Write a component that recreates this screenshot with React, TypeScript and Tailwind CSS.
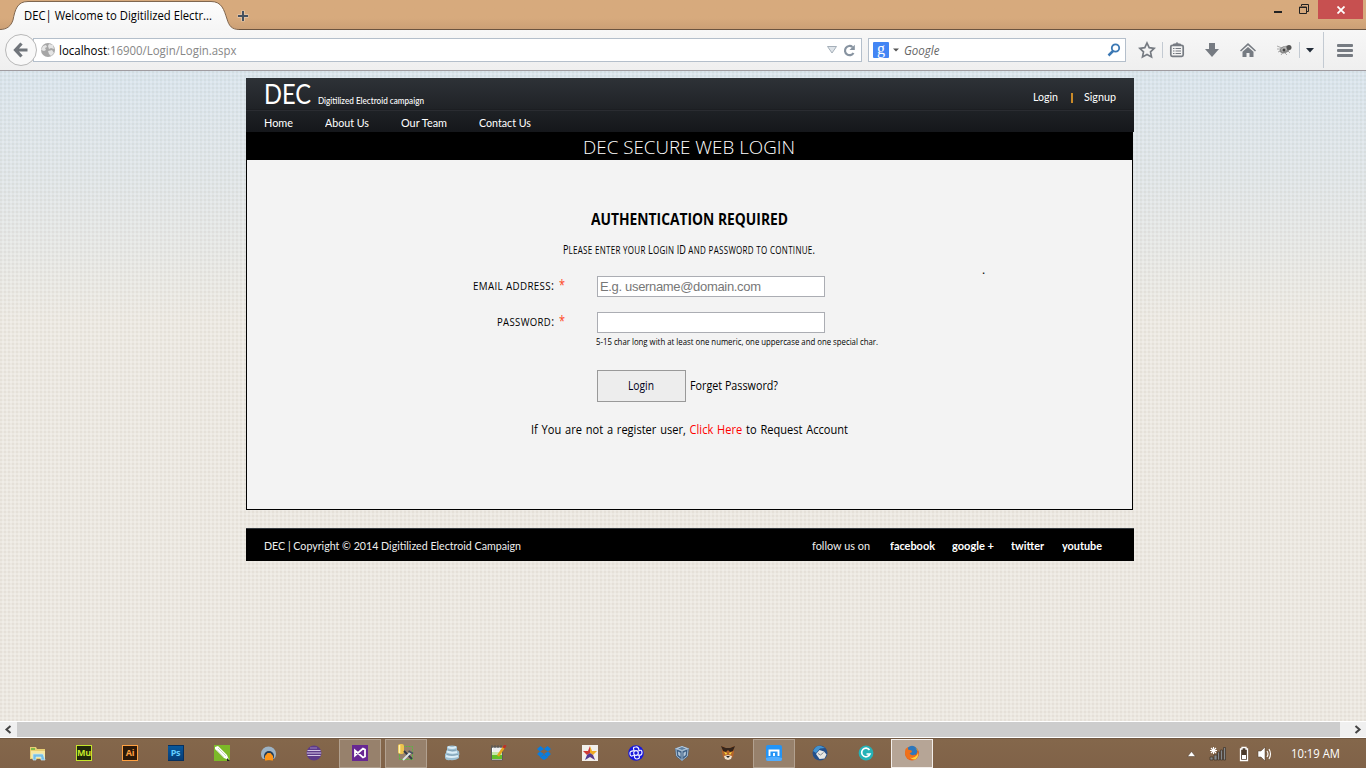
import React, { useLayoutEffect, useRef, useState } from "react";

type FitProps = { w: number; className?: string; children: React.ReactNode };

/* Sets a line of text to an exact advance width. */
function Fit({ w, className = "", children }: FitProps) {
  const ref = useRef<HTMLSpanElement>(null);
  const [scale, setScale] = useState(1);
  useLayoutEffect(() => {
    if (ref.current && ref.current.offsetWidth) setScale(w / ref.current.getBoundingClientRect().width);
  }, []);
  return (
    <span className={`block shrink-0 ${className}`} style={{ width: w }}>
      <span ref={ref} className="inline-block origin-left whitespace-pre" style={{ transform: `scaleX(${scale})` }}>
        {children}
      </span>
    </span>
  );
}

/* Small capitals with taller small letters than the browser's own synthesis. */
function SmallCaps({ text }: { text: string }) {
  return (
    <>
      {text.split(/([a-z]+)/).map((part, i) =>
        /[a-z]/.test(part) ? <span key={i} className="text-[10.5px] uppercase tracking-[0.4px]">{part}</span> : part,
      )}
    </>
  );
}

const Sep = ({ className = "" }: { className?: string }) => <div className={`w-px shrink-0 bg-[#c3cad2] ${className}`} />;

function TitleBar() {
  return (
    <div className="relative flex h-[30px] bg-linear-to-b from-[#d7aa7d] from-60% to-[#cb9f75]">
      <div className="absolute inset-x-0 bottom-0 h-px bg-[#6b5440]" />
      <svg className="absolute left-0 top-0" width="240" height="30">
        <defs>
          <linearGradient id="tab" x1="0" y1="0" x2="0" y2="1">
            <stop offset="0" stopColor="#fdfdfd" />
            <stop offset="1" stopColor="#f5f5f5" />
          </linearGradient>
        </defs>
        <path d="M0 29.5C7 29.5 11 26 13 20C15 10 17 1.5 28 1.5H211C222 1.5 224 10 227 19C229 26 232 29.5 239 29.5V30H0Z" fill="url(#tab)" />
        <path d="M0 29.5C7 29.5 11 26 13 20C15 10 17 1.5 28 1.5H211C222 1.5 224 10 227 19C229 26 232 29.5 239 29.5" fill="none" stroke="#806750" strokeWidth="1" />
      </svg>
      <div className="relative flex w-full">
        <Fit w={188} className="ml-6 mt-[7px] font-['Open_Sans',sans-serif] text-[12px] leading-[18px] text-black">
          DEC| Welcome to Digitilized Electr...
        </Fit>
        <svg className="ml-[25px] mt-[10px]" width="12" height="12">
          <path d="M6 .5v11M.5 6h11" stroke="#fff" strokeOpacity=".3" strokeWidth="4" />
          <path d="M6 1v10M1 6h10" stroke="#475260" strokeWidth="2" />
        </svg>
        <div className="flex-1" />
        <div className="mr-[17px] mt-[11px] h-[2px] w-2 bg-[#222]" />
        <svg className="mr-[9px] mt-[4px]" width="10" height="10" fill="none" stroke="#222">
          <path d="M2.5 2V.5h7v7H8" />
          <path d="M.5 3h7v6.5h-7z" />
          <path d="M0 3.5h8" />
        </svg>
        <div className="mr-[3px] flex h-[19px] w-[45px] items-center justify-center bg-[#c75050]">
          <svg width="8" height="8"><path d="M.5 .5l7 7M7.5 .5l-7 7" stroke="#fff" strokeWidth="1.8" /></svg>
        </div>
      </div>
    </div>
  );
}

function Toolbar() {
  return (
    <div className="flex h-[41px] items-center border-b border-[#a09ca1] bg-linear-to-b from-[#f7f7f7] to-[#efefef] font-['Open_Sans',sans-serif] text-[12px]">
      <div className="relative z-10 ml-[5px] flex size-8 shrink-0 items-center justify-center rounded-full border border-[#b8b8b8] bg-[#f8f8f8]">
        <svg width="16" height="16"><path d="M8.5 1.5L2.5 8l6 6.5M2.5 8h12" fill="none" stroke="#70757b" strokeWidth="3.2" /></svg>
      </div>
      <div className="-ml-1 flex h-6 w-[829px] shrink-0 items-center border border-[#b4bfcb] bg-white">
        <svg className="ml-[6px]" width="16" height="16">
          <circle cx="8" cy="8" r="7" fill="#a6a6a6" />
          <path d="M3 4l3-1 1 2-2 1 1 2-2 1-3-1zM9 2l4 1 1 4-3-1-2 1-1-3zM8 9l4-1 2 3-3 3-2-2z" fill="#e4e4e4" />
        </svg>
        <Fit w={48} className="mb-[-2px] ml-[3px] leading-[18px] text-black">localhost</Fit>
        <Fit w={129.5} className="mb-[-2px] leading-[18px] text-[#868686]">:16900/Login/Login.aspx</Fit>
        <div className="flex-1" />
        <svg className="mr-[6px]" width="10" height="8"><path d="M.5 .5h9L5 7z" fill="#dfe4e9" stroke="#a5afb9" /></svg>
        <svg className="mr-[5px]" width="13" height="13">
          <path d="M10.5 9A4.6 4.6 0 1 1 9.5 3" fill="none" stroke="#8793a0" strokeWidth="2.2" />
          <path d="M11.8 .8V6H6.5z" fill="#8793a0" />
        </svg>
      </div>
      <div className="ml-[6px] flex h-6 w-[258px] shrink-0 items-center border border-[#b4bfcb] bg-white">
        <div className="ml-[4px] flex size-4 items-center justify-center rounded-[1px] bg-[#4285f4] pb-[3px] font-['Liberation_Serif',serif] text-[16px] leading-none text-white">g</div>
        <svg className="ml-1" width="6" height="4"><path d="M0 .5h6L3 3.5z" fill="#555" /></svg>
        <Fit w={35.5} className="mb-[-2px] ml-[5px] italic leading-[18px] text-[#666]">Google</Fit>
        <div className="flex-1" />
        <svg className="mr-[4px]" width="14" height="14" fill="none" stroke="#3b78b4">
          <circle cx="8.5" cy="5" r="3.7" strokeWidth="1.8" />
          <path d="M6 8l-4.5 4.5" strokeWidth="2.5" />
        </svg>
      </div>
      <svg className="ml-3 shrink-0" width="18" height="18">
        <path d="M9 2l2.2 4.700 5 .6-3.700 3.500 1 5.100L9 13.400l-4.500 2.500 1-5.100L1.800 7.300l5-.6z" fill="none" stroke="#767b82" strokeWidth="1.7" />
      </svg>
      <Sep className="ml-[6px] h-4" />
      <svg className="ml-[6px] shrink-0" width="16" height="16">
        <path d="M4.5 3V2h2L8 .5 9.500 2h2v1" fill="#767b82" stroke="#767b82" />
        <rect x="1.800" y="3.300" width="12.400" height="11" rx="1.500" fill="#f3f3f3" stroke="#767b82" strokeWidth="1.7" />
        <path d="M4 6.500h1.500M6.500 6.500H12M4 9h1.500M6.500 9H12M4 11.500h1.500M6.500 11.500H12" stroke="#767b82" strokeWidth="1.2" />
      </svg>
      <svg className="ml-[19px] shrink-0" width="16" height="16" fill="#767b82"><path d="M5 1h6v6h4l-7 8-7-8h4z" /></svg>
      <svg className="ml-5 shrink-0" width="16" height="16" fill="#767b82"><path d="M8 1l8 7.500-1 1L8 3.300 1 9.500l-1-1zM8 5l5.500 4.800V15h-4v-4h-3v4h-4V9.800z" /></svg>
      <svg className="ml-5 shrink-0" width="17" height="16">
        <path d="M1 4l5 2M1 7h5M2 10l5-2M5 13l3-4M9 11l2 2M12 9l2 2" stroke="#aaa" />
        <ellipse cx="9" cy="7.500" rx="5.500" ry="3.500" transform="rotate(-22 9 8)" fill="#888" />
        <path d="M5 7l4-3 3 2-2 3-4 1z" fill="#b5b5b5" /><circle cx="13" cy="5.500" r="2.500" fill="#555" /><circle cx="8" cy="8" r="1.500" fill="#444" />
      </svg>
      <Sep className="ml-[6px] h-4" />
      <svg className="ml-[6px] shrink-0" width="8" height="5"><path d="M0 0h8L4 4.500z" fill="#222c38" /></svg>
      <Sep className="ml-[9px] h-9" />
      <svg className="ml-[13px] shrink-0" width="16" height="13" fill="#767b82"><rect width="16" height="3" rx="1" /><rect y="5" width="16" height="3" rx="1" /><rect y="10" width="16" height="3" rx="1" /></svg>
    </div>
  );
}

function SiteHeader() {
  return (
    <header className="h-[54px] w-[888px] bg-linear-to-b from-[#2e3237] to-[#15171b] font-['Lato',sans-serif] text-white">
      <div className="flex h-8 border-b border-[#1c1e22] pl-[18px] pr-[18px]">
        <Fit w={47} className="text-[26px] leading-[33px]">DEC</Fit>
        <Fit w={106} className="ml-[7px] mt-[15px] text-[9px] font-medium leading-4">Digitilized Electroid campaign</Fit>
        <div className="flex-1" />
        <Fit w={25} className="mt-[10px] text-[12px] leading-[18px]">Login</Fit>
        <div className="ml-[13px] mt-[15px] h-[10px] w-[2px] shrink-0 bg-[#c98a28]" />
        <Fit w={32} className="ml-[11px] mt-[10px] text-[12px] leading-[18px]">Signup</Fit>
      </div>
      <nav className="flex h-[22px] items-center border-t border-[#2a2c31] pl-[18px] pt-[2px] text-[12px] leading-[18px]">
        <Fit w={29}>Home</Fit>
        <Fit w={44} className="ml-8">About Us</Fit>
        <Fit w={46} className="ml-8">Our Team</Fit>
        <Fit w={52} className="ml-[31.5px]">Contact Us</Fit>
      </nav>
    </header>
  );
}

function LoginPanel() {
  return (
    <main className="relative h-[378px] w-[887px] border-x border-b border-black bg-[#f3f3f3] font-['Open_Sans',sans-serif] text-[12px] text-black">
      <h1 className="flex h-7 justify-center bg-black font-light text-white">
        <Fit w={212} className="-ml-[1px] text-[18px] leading-[30px]">DEC SECURE WEB LOGIN</Fit>
      </h1>
      <form className="flex flex-col pt-12">
        <Fit w={197} className="ml-[344px] h-6 text-[16px] font-bold leading-[22px]">AUTHENTICATION REQUIRED</Fit>
        <Fit w={252} className="ml-[316px] mt-2 h-5 leading-5"><SmallCaps text="Please enter your Login ID and password to continue." /></Fit>
        <div className="mt-4 flex h-[21px] items-center justify-end pr-[307px] leading-[19px]">
          <Fit w={81} className="mb-[2px]"><SmallCaps text="email address:" /></Fit>
          <Fit w={6} className="mb-[4px] ml-[5px] text-[15px] text-[#ff4422]">*</Fit>
          <input placeholder="E.g. username@domain.com" className="ml-[32px] h-[21px] w-[228px] border border-[#abadb3] bg-white px-[2px] font-['Liberation_Sans',sans-serif] text-[13px] tracking-[-0.33px] placeholder:text-[#777] outline-none" />
        </div>
        <div className="mt-[15px] flex h-[21px] items-center justify-end pr-[307px] leading-[19px]">
          <Fit w={57} className="mb-[2px]"><SmallCaps text="password:" /></Fit>
          <Fit w={6} className="mb-[4px] ml-[5px] text-[15px] text-[#ff4422]">*</Fit>
          <input type="password" className="ml-[32px] h-[21px] w-[228px] border border-[#abadb3] bg-white px-[2px] outline-none" />
        </div>
        <Fit w={282} className="ml-[349px] h-[18px] text-[9px] font-medium leading-[18px]">5-15 char long with at least one numeric, one uppercase and one special char.</Fit>
        <div className="ml-[350px] mt-[19px] flex h-8 items-center">
          <button type="button" className="flex h-8 w-[89px] items-center justify-center border border-[#999] bg-[#ededed] pr-[2px] text-[#000020]"><Fit w={26}>Login</Fit></button>
          <Fit w={88} className="ml-[4px]">Forget Password?</Fit>
        </div>
        <Fit w={317} className="ml-[284px] mt-[18px] h-5 leading-5 [word-spacing:1px]">
          If You are not a register user, <a className="text-[#ff0000]">Click Here</a> to Request Account
        </Fit>
      </form>
      <span className="absolute left-[735px] top-[129px] text-[12px] leading-[18px]">.</span>
    </main>
  );
}

function SiteFooter() {
  return (
    <footer className="mt-[18px] flex h-[33px] w-[888px] items-center border-t border-[#33383d] bg-black pl-[18px] pr-[32px] pt-[1px] font-['Lato',sans-serif] text-[12px] leading-[18px] text-[#eee]">
      <Fit w={257}>DEC | Copyright © 2014 Digitilized Electroid Campaign</Fit>
      <div className="flex-1" />
      <Fit w={58}>follow us on</Fit>
      <div className="flex font-bold text-white">
        <Fit w={45} className="ml-5">facebook</Fit>
        <Fit w={42} className="ml-[17px]">google +</Fit>
        <Fit w={33} className="ml-[17px]">twitter</Fit>
        <Fit w={40} className="ml-[18px]">youtube</Fit>
      </div>
    </footer>
  );
}

function ScrollBar() {
  return (
    <div className="flex h-[17px] items-center justify-between border-y border-white bg-[#f0f0f0]">
      <svg width="17" height="15"><path d="M10.5 4L6.5 7.5l4 3.5" fill="none" stroke="#444" strokeWidth="2" /></svg>
      <div className="h-full flex-1 bg-[#cdcdcd]" />
      <svg width="26" height="15"><path d="M15.5 4l4 3.5-4 3.5" fill="none" stroke="#444" strokeWidth="2" /></svg>
    </div>
  );
}

type Tile = { name: string; state?: "open" | "active"; art: React.ReactNode };

const label = (text: string, cls: string) => (
  <div className={`flex size-4 items-center justify-center font-['Open_Sans',sans-serif] text-[9px] font-bold leading-none tracking-tight ${cls}`}>{text}</div>
);

const tiles: Tile[] = [
  { name: "files", art: <svg width="18" height="16"><path d="M1 2h6l1 2h8v10H1z" fill="#e9ce72" /><path d="M2 3h4v2H2z" fill="#82b94b" /><path d="M2 6h14v7H2z" fill="#f6e7a0" /><path d="M4 15V9h10l2 6h-4v-3H7v3z" fill="#75bfe5" stroke="#cbeaf8" strokeWidth=".7" /></svg> },
  { name: "muse", art: label("Mu", "border border-[#c5e52a] bg-[#22280b] text-[#c5e52a]") },
  { name: "illustrator", art: label("Ai", "border border-[#ffa040] bg-[#2d1908] text-[#ffa040]") },
  { name: "photoshop", art: label("Ps", "border-y border-r border-[#06305f] bg-linear-to-b from-[#08589c] to-[#063d78] text-[#63ccff]") },
  { name: "corel", art: <svg width="16" height="16"><path d="M0 0h16v16H0z" fill="#7cb928" /><path d="M1 2l3-1 9 9 2 5-5-2L1 4z" fill="#fff" /><path d="M4 3l8 8M2.5 5l7 7" stroke="#b9cba8" strokeWidth=".8" /><path d="M13 13l3 3h-3z" fill="#222" /></svg> },
  { name: "avast", art: <svg width="17" height="16"><path d="M3 14a7.5 7.5 0 1 1 11 0z" fill="#9cb3c6" /><circle cx="9" cy="11" r="5" fill="#243e58" /><path d="M5 15.5V11l2.5-3h3l2.5 3v4.5z" fill="#ff9518" /></svg> },
  { name: "eclipse", art: <svg width="16" height="16"><circle cx="8" cy="8" r="7.5" fill="#5d3b88" /><path d="M1.5 5.5h13M.8 8h14.400M1.5 10.5h13" stroke="#d3c5e3" strokeWidth="1.1" /><path d="M4 3h7" stroke="#9c83c0" /></svg> },
  { name: "studio", state: "open", art: <svg width="16" height="16"><path d="M0 0h16v16H0z" fill="#672793" /><path d="M3 5.5v5l8-7 2 1v7l-2 1-8-7z" fill="none" stroke="#fff" strokeWidth="1.8" /></svg> },
  { name: "sqltools", state: "open", art: <svg width="18" height="17"><rect x="2.5" y="2.5" width="13" height="13" fill="none" stroke="#56b83e" strokeDasharray="2 1" /><rect x="1" y="0" width="6" height="10" rx="2" fill="#edc34d" /><path d="M2.5 1v8" stroke="#fff2b0" strokeWidth="1.5" /><path d="M7 7l8 8" stroke="#333b4a" strokeWidth="2" /><path d="M14 8l-8 8" stroke="#dbe4ea" strokeWidth="2" /><path d="M11.500 7l4.500 2.500" stroke="#4b5360" strokeWidth="2" /></svg> },
  { name: "database", art: <svg width="16" height="16"><path d="M3 1.5q5-2 10 0V5q3 1 2 3 1 1 0 2v3q-4 3-9 2-4 1-5-2V9l1-1V6l1-1z" fill="#9dbfd2" /><path d="M4 2q4 2 8 0M3 6.500q5 2 10 .5M2 11q5 2 12 0" stroke="#dceef7" fill="none" strokeWidth="2" /><path d="M4 5q4 1.500 8 0M3 9.500q5 1.500 11 0" stroke="#7899ad" fill="none" strokeWidth=".8" /></svg> },
  { name: "notepad", art: <svg width="17" height="16"><path d="M1.5 2h11v13h-11z" fill="#fff" stroke="#5b5b5b" /><path d="M2 9h10v5H2z" fill="#64bf29" /><path d="M2 7h10v3H2z" fill="#c8e8a8" /><path d="M3 6h8M3 4h8" stroke="#ddd" /><path d="M2 0v3M5 0v3M8 0v3M11 0v3" stroke="#555" /><path d="M8 11l6-9" stroke="#e6a51c" strokeWidth="2.5" /><path d="M13.5 3l2-3" stroke="#bd3029" strokeWidth="2.5" /></svg> },
  { name: "dropbox", art: <svg width="16" height="16" fill="#087de0"><path d="M4.500 1L8 4 4 6.500 1 4zM11.500 1L15 4l-3 2.500L8 4zM4 6.500L8 9l-3.500 3L1 9zM12 6.500L15 9l-3.500 3L8 9zM4 12.500l4-2.700 4 2.700L8 15z" /></svg> },
  { name: "star", art: <svg width="16" height="16"><path d="M0 0h16v16H0z" fill="#f2efea" /><path d="M8 1l2 5h5l-4 4-3-2z" fill="#efab23" /><path d="M8 1L6 6H1l4 4 3-2z" fill="#cf3934" /><path d="M5 10l-2 5 5-3V8z" fill="#4f3792" /><path d="M8 8v4l5 3-2-5z" fill="#5a3a86" /></svg> },
  { name: "knot", art: <svg width="16" height="16"><circle cx="8" cy="8" r="7.8" fill="#1818dc" /><g fill="none" stroke="#f4f4ff" strokeWidth="1.2"><circle cx="8" cy="8" r="2.3" /><path d="M6.500 6Q4 2 7.500 2Q11 1.500 11 6M10.500 6Q14 4 14 7.500Q14 11 10 10M10.500 10Q13 13.500 9 14Q6 14 6.500 10M6 10Q2.500 12.500 2 9Q1.500 5.500 6 6" /></g></svg> },
  { name: "virtualbox", art: <svg width="16" height="16"><path d="M1 3.500L8 1l7 2.500-1 8L8 16l-6-4.500z" fill="#3f6085" /><path d="M1 3.500L8 6l7-2.500L8 1z" fill="#c0d2e2" /><path d="M1.500 3.500L8 6l6.500-2.500M8 6v9.500M2 4l.7 7L8 15.300l5.300-4.300.7-7" stroke="#9fb7ce" fill="none" /><path d="M4 3.500l4-1.400 4 1.400L8 5z" fill="#5d7e9f" /><path d="M4 6.500l2.500 1.200v4L4.300 10zM12 6.500L9.500 7.700v4l2.200-1.700z" fill="#b5c8da" /></svg> },
  { name: "tiger", art: <svg width="16" height="16"><path d="M2 1l4 2h4l4-2v6l-1 5-5 3-5-3-1-5z" fill="#b5652b" /><path d="M1 1l5 2h4l5-2-2 5-3 1-2-2-2 2-3-1z" fill="#35251b" /><path d="M4 7l3 1-1 2zM12 7L9 8l1 2z" fill="#ffe03a" /><path d="M4 11l4-1 4 1-1 3-3 1-3-1z" fill="#eee2d0" /><path d="M6 11h4l-2 2z" fill="#222" /></svg> },
  { name: "maxthon", state: "open", art: <svg width="16" height="16"><rect width="16" height="16" rx="2" fill="#2494f5" /><path d="M0 13q8-3 16 0v1q0 2-2 2H2q-2 0-2-2z" fill="#51adff" /><path d="M3.5 11V5.5h9V11M8 8v3" fill="none" stroke="#fff" strokeWidth="1.9" /></svg> },
  { name: "thunderbird", art: <svg width="16" height="16"><circle cx="8" cy="8" r="7.5" fill="#244f8a" /><path d="M1 6Q4 0 9 1l4 2-5 .5L4 8z" fill="#4393cf" /><path d="M4 9l3.5-4 4.500 1.500 2.500 3-2 4-5 .5z" fill="#e8e7e3" /><path d="M6 8.500l2.500 1.500 3-2.500" fill="none" stroke="#858a90" /></svg> },
  { name: "gclient", art: <svg width="16" height="16"><circle cx="8" cy="8" r="7.4" fill="#24b2b7" /><path d="M11.500 5A4.300 4.300 0 1 0 12 9H8.500" fill="none" stroke="#fff" strokeWidth="1.7" /></svg> },
  { name: "firefox", state: "active", art: <svg width="16" height="16"><circle cx="8" cy="8.5" r="7" fill="#e8641b" /><circle cx="8" cy="6" r="5.3" fill="#2e77bb" /><path d="M1.500 4l2.500-2v2.500l3.500 1L8 7l-2.500 1.500Q8 11.500 11 9.500L12.500 11l-4 3.500-5-1L1 9z" fill="#ef701b" /><path d="M11 2q4.500 4 2 8-3 4-7 2.500 3 3 6 1.500 5-5-1-12z" fill="#ffd23b" /></svg> },
];

function TaskBar() {
  return (
    <div className="flex h-[30px] items-center border-t border-[#715842] bg-linear-to-b from-[#84674b] to-[#806248] pl-[15px]">
      {tiles.map((t) => (
        <div key={t.name} className="flex h-[29px] w-[46px] shrink-0 justify-center">
          <div
            className={
              t.state === "active"
                ? "flex h-[29px] w-[42px] items-center justify-center border border-[#f3eeea] bg-[#b6a596] pb-[2px]"
                : t.state === "open"
                  ? "flex h-[29px] w-[42px] items-center justify-center border border-[#b2a190] bg-[#97816c] pb-[2px]"
                  : "flex h-[29px] w-[42px] items-center justify-center pb-[2px]"
            }
          >
            {t.art}
          </div>
        </div>
      ))}
      <div className="flex-1" />
      <svg className="mr-[13px] mt-px shrink-0" width="9" height="6"><path d="M.5 5.5L4.5 .5l4 5z" fill="#fff" stroke="#4c3929" strokeWidth=".5" /></svg>
      <svg className="mr-[13px] shrink-0" width="17" height="17">
        <path d="M1 12h3v3H1zM5 10h3v5H5zM8.500 7h2v8h-2zM11.500 5h2v10h-2zM14.500 2.500h2V15h-2z" fill="#85898c" stroke="#3d3026" strokeWidth=".7" />
        <path d="M4.500 2v7M1 5.500h7M2 3l5 5M7 3L2 8" stroke="#fff" strokeWidth="1.1" />
      </svg>
      <svg className="mr-[8px] shrink-0" width="10" height="16"><path d="M3 1.500h4V3h1.500v11.500h-7V3H3z" fill="#4b3a2b" stroke="#fff" strokeWidth="1.3" /><path d="M3 9h4v4H3z" fill="#fff" /></svg>
      <svg className="mr-[18px] shrink-0" width="16" height="16"><path d="M1 5h3l4-4v14l-4-4H1z" fill="#fff" stroke="#4b392b" strokeWidth=".5" /><path d="M10 5q2 3 0 6M12 3q3 5 0 10" fill="none" stroke="#fff" strokeWidth="1.1" /></svg>
      <Fit w={49} className="mr-[26px] font-['Open_Sans',sans-serif] text-[12px] leading-[18px] text-white">10:19 AM</Fit>
    </div>
  );
}

export default function App() {
  return (
    <div className="flex h-[768px] w-[1366px] flex-col overflow-hidden">
      <TitleBar />
      <Toolbar />
      <div className="h-[650px] bg-[#ece8e1] bg-[radial-gradient(circle_at_1px_1px,rgba(120,100,70,0.06)_0_1px,transparent_1.5px),radial-gradient(circle_at_3px_3px,rgba(255,255,255,0.2)_0_1px,transparent_1.5px),linear-gradient(to_bottom,#d9e4ec_0,#e0e5e7_110px,#ece9e2_250px,#ece8e1_100%)] bg-size-[4px_4px,4px_4px,100%_100%] pl-[246px] pt-[7px]">
        <SiteHeader />
        <LoginPanel />
        <SiteFooter />
      </div>
      <ScrollBar />
      <TaskBar />
    </div>
  );
}
